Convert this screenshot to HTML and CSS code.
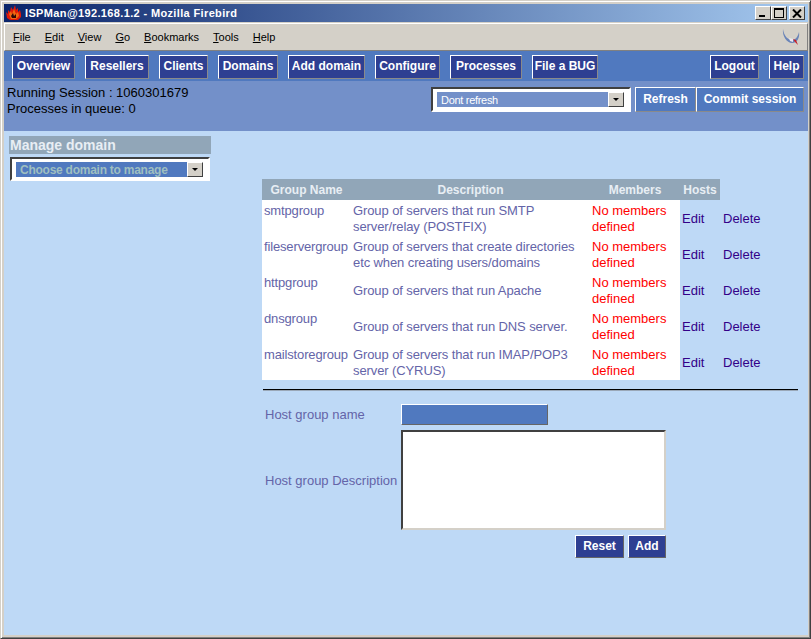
FILE: index.html
```html
<!DOCTYPE html>
<html lang="en">
<head>
<meta charset="UTF-8">
<title>ISPMan@192.168.1.2 - Mozilla Firebird</title>
<link rel="stylesheet" href="styles.css">
</head>
<body>
<div class="window">
  <div class="titlebar">
    <svg class="appicon" width="16" height="16" viewBox="0 0 16 16">
      <path d="M0 7 L2 9 L2 5 L4 7 L5 2 L7 5 L9 0 L10 5 L12 3 L12 7 L14 5 L15 9 L15 12 L12 15 L4 15 L1 13 Z" fill="#e01808"/>
      <path d="M3 9 L5 6 L6 9 L8 4 L10 9 L12 7 L13 11 L10 14 L5 14 Z" fill="#f06a10"/>
      <path d="M5 11 L7 8 L8 11 L10 9 L10 13 L6 13 Z" fill="#300808"/>
    </svg>
    <span class="title">ISPMan@192.168.1.2 - Mozilla Firebird</span>
    <div class="winbtns">
      <span class="winbtn"><i class="min"></i></span>
      <span class="winbtn"><i class="max"></i></span>
      <span class="winbtn close">
        <svg width="10" height="9" viewBox="0 0 10 9"><path d="M1 0.5 L9 8.5 M9 0.5 L1 8.5" stroke="#000" stroke-width="2"/></svg>
      </span>
    </div>
  </div>
  <div class="menubar">
    <span class="menu"><u>F</u>ile</span>
    <span class="menu"><u>E</u>dit</span>
    <span class="menu"><u>V</u>iew</span>
    <span class="menu"><u>G</u>o</span>
    <span class="menu"><u>B</u>ookmarks</span>
    <span class="menu"><u>T</u>ools</span>
    <span class="menu"><u>H</u>elp</span>
    <svg class="throbber" width="20" height="20" viewBox="0 0 20 20">
      <path d="M2 2 C3 9 7 13 11 13 C15 13 17 9 18 5 C19 11 16 16 11 16 C6 16 1 9 2 2 Z" fill="#6a84b8"/>
      <path d="M8 11 L12 12 L12 15 L9 14 Z" fill="#ece8f0"/>
      <path d="M12 12 L15 13 L17 18 L14 15 Z" fill="#c8202a"/>
    </svg>
  </div>
  <div class="nav">
    <a class="btn overview">Overview</a>
    <a class="btn resellers">Resellers</a>
    <a class="btn clients">Clients</a>
    <a class="btn domains">Domains</a>
    <a class="btn adddomain">Add domain</a>
    <a class="btn configure">Configure</a>
    <a class="btn processes">Processes</a>
    <a class="btn filebug">File a BUG</a>
    <a class="btn logout">Logout</a>
    <a class="btn help">Help</a>
  </div>
  <div class="info">
    <div class="status">
      <div>Running Session : 1060301679</div>
      <div>Processes in queue: 0</div>
    </div>
    <div class="selectbox refresh">
      <div class="selectfield"><span>Dont refresh</span><b class="arrow"></b></div>
    </div>
    <a class="lightbtn refreshbtn">Refresh</a>
    <a class="lightbtn commitbtn">Commit session</a>
  </div>
  <div class="main">
    <div class="side">
      <div class="sidehead">Manage domain</div>
      <div class="selectbox domainbox">
        <div class="selectfield domainfield"><span>Choose domain to manage</span><b class="arrow"></b></div>
      </div>
    </div>
    <div class="content">
      <table class="groups">
        <tr>
          <th class="c1">Group Name</th>
          <th class="c2">Description</th>
          <th class="c3">Members</th>
          <th class="c4">Hosts</th>
          <th class="c5"></th>
        </tr>
        <tr>
          <td class="name">smtpgroup</td>
          <td class="desc">Group of servers that run SMTP server/relay (POSTFIX)</td>
          <td class="none">No members defined</td>
          <td class="act"><a>Edit</a></td>
          <td class="act"><a>Delete</a></td>
        </tr>
        <tr>
          <td class="name">fileservergroup</td>
          <td class="desc">Group of servers that create directories etc when creating users/domains</td>
          <td class="none">No members defined</td>
          <td class="act"><a>Edit</a></td>
          <td class="act"><a>Delete</a></td>
        </tr>
        <tr>
          <td class="name">httpgroup</td>
          <td class="desc mid">Group of servers that run Apache</td>
          <td class="none">No members defined</td>
          <td class="act"><a>Edit</a></td>
          <td class="act"><a>Delete</a></td>
        </tr>
        <tr>
          <td class="name">dnsgroup</td>
          <td class="desc mid">Group of servers that run DNS server.</td>
          <td class="none">No members defined</td>
          <td class="act"><a>Edit</a></td>
          <td class="act"><a>Delete</a></td>
        </tr>
        <tr>
          <td class="name">mailstoregroup</td>
          <td class="desc">Group of servers that run IMAP/POP3 server (CYRUS)</td>
          <td class="none">No members defined</td>
          <td class="act"><a>Edit</a></td>
          <td class="act"><a>Delete</a></td>
        </tr>
      </table>
      <div class="rule"></div>
      <div class="formrow">
        <label class="lbl">Host group name</label>
        <div class="textinput"></div>
      </div>
      <div class="formrow descrow">
        <label class="lbl">Host group Description</label>
        <div class="textarea"></div>
      </div>
      <div class="formbtns">
        <a class="btn formbtn resetbtn">Reset</a>
        <a class="btn formbtn addbtn">Add</a>
      </div>
    </div>
  </div>
</div>
</body>
</html>
```

FILE: styles.css
```css
html, body { margin: 0; padding: 0; height: 100%; }
body { background: #d4d0c8; font-family: "Liberation Sans", Arial, sans-serif; font-size: 13px; }

.window { box-sizing: border-box; width: 811px; height: 639px; display: flex; flex-direction: column; padding: 3px 2px 3px 3px; background: #d4d0c8; border: 1px solid; border-color: #d4d0c8 #404040 #404040 #d4d0c8; box-shadow: inset 1px 1px 0 #fff, inset -1px -1px 0 #808080; }

.titlebar { height: 18px; flex: none; display: flex; align-items: center; background: linear-gradient(to right, #0a246a, #a6caf0); color: #fff; padding-left: 2px; }
.appicon { flex: none; margin-right: 3px; }
.title { font-weight: bold; font-size: 11px; letter-spacing: 0.36px; }
.winbtns { margin-left: auto; display: flex; margin-right: 3px; }
.winbtn { box-sizing: border-box; width: 16px; height: 14px; background: #d4d0c8; border: 1px solid; border-color: #fff #404040 #404040 #fff; display: flex; align-items: center; justify-content: center; }
.winbtn.close { margin-left: 2px; }
.min { display: block; width: 6px; height: 2px; background: #000; margin-top: 6px; margin-right: 2px; }
.max { display: block; box-sizing: border-box; width: 10px; height: 10px; border: 1px solid #000; border-top-width: 2px; }

.menubar { height: 28px; flex: none; margin-top: 1px; display: flex; align-items: center; background: #d4d0c8; padding-left: 8px; box-sizing: border-box; border: 1px solid; border-color: #fff #808080 #808080 #fff; font-size: 11px; color: #000; }
.menu { margin-right: 14px; }
.throbber { margin-left: auto; margin-right: 6px; }

.nav { height: 30px; flex: none; box-sizing: border-box; display: flex; align-items: flex-start; gap: 10px; background: #5079bf; padding: 4px 4px 0 8px; }
.btn { box-sizing: border-box; height: 24px; line-height: 21px; text-align: center; background: #2e3f92; color: #fff; font-weight: bold; font-size: 12px; border: 1px solid; border-color: #fff #8a8a8a #8a8a8a #fff; white-space: nowrap; }
.overview { width: 63px; }
.resellers { width: 64px; }
.clients { width: 49px; }
.domains { width: 60px; }
.adddomain { width: 77px; }
.configure { width: 65px; }
.processes { width: 72px; }
.filebug { width: 66px; }
.logout { width: 49px; margin-left: auto; }
.help { width: 35px; }

.info { height: 50px; flex: none; box-sizing: border-box; display: flex; align-items: flex-start; background: #7390c9; padding: 6px 4px 0 3px; }
.status { color: #000; font-size: 13px; line-height: 16px; margin-top: -2px; }
.selectbox { box-sizing: border-box; background: #fff; border: 2px solid; border-color: #404040 #fff #fff #404040; padding: 3px 5px 4px 4px; }
.refresh { margin-left: auto; width: 200px; height: 25px; margin-right: 4px; }
.selectfield { display: flex; align-items: center; justify-content: space-between; height: 15px; background: #7390c9; color: #fff; font-size: 11px; letter-spacing: -0.3px; padding-left: 4px; }
.arrow { box-sizing: border-box; flex: none; width: 16px; height: 15px; background: #d4d0c8; border: 1px solid; border-color: #fff #404040 #404040 #fff; position: relative; }
.arrow::after { content: ""; position: absolute; left: 4px; top: 5px; border: 3px solid transparent; border-top: 3px solid #000; border-bottom: 0; }
.lightbtn { box-sizing: border-box; height: 25px; line-height: 23px; text-align: center; background: #5079bf; color: #fff; font-weight: bold; font-size: 12px; border: 1px solid; border-color: #fff #8a8a8a #8a8a8a #fff; }
.refreshbtn { width: 61px; }
.commitbtn { width: 108px; }

.main { flex: 1; display: flex; background: #bed9f6; min-height: 0; }
.side { width: 258px; flex: none; padding: 5px 0 0 5px; box-sizing: border-box; }
.sidehead { width: 202px; height: 18px; line-height: 18px; box-sizing: border-box; padding-left: 1px; background: #91a6b8; color: #e8eef4; font-weight: bold; font-size: 14px; }
.domainbox { width: 200px; height: 24px; margin: 3px 0 0 1px; }
.domainfield { background: #5079bf; color: #9fbfc0; font-weight: bold; font-size: 12px; letter-spacing: -0.25px; }

.content { flex: 1; padding-top: 48px; padding-right: 8px; }
.groups { border-collapse: collapse; width: 538px; table-layout: fixed; }
.groups th { height: 21px; padding: 0; background: #91a6b8; color: #e8eef4; font-size: 12px; font-weight: bold; text-align: center; }
.groups .c5 { background: none; }
.groups td { height: 36px; padding: 3px 2px 0; line-height: 16px; box-sizing: border-box; }
.c1 { width: 89px; }
.c2 { width: 239px; }
.c3 { width: 90px; }
.c4 { width: 40px; }
.c5 { width: 80px; }
.name { background: #fff; color: #6464a8; vertical-align: top; white-space: nowrap; letter-spacing: -0.15px; }
.desc { background: #fff; color: #6464a8; vertical-align: top; letter-spacing: -0.1px; }
.groups .desc.mid { vertical-align: middle; padding-top: 2px; }
.none { background: #fff; color: #f00; vertical-align: top; }
.groups .act { color: #330088; white-space: nowrap; padding-top: 2px; }
.groups .act + .act { padding-left: 3px; }

.rule { height: 1px; width: 535px; margin: 9px 0 13px 1px; background: #000; border-bottom: 1px solid #9aa8b8; }
.formrow { display: flex; align-items: center; }
.lbl { width: 136px; padding-left: 3px; flex: none; box-sizing: border-box; color: #6464a8; white-space: nowrap; margin-right: 3px; }
.textinput { box-sizing: border-box; width: 147px; height: 21px; background: #5079bf; border: 1px solid; border-color: #fff #666 #666 #fff; }
.descrow { margin-top: 5px; }
.textarea { box-sizing: border-box; width: 265px; height: 100px; background: #fff; border: 2px solid; border-color: #404040 #d4d0c8 #d4d0c8 #404040; }
.formbtns { display: flex; justify-content: flex-end; width: 404px; gap: 4px; margin-top: 5px; }
.formbtn { height: 23px; line-height: 21px; border-color: #fff #666 #666 #fff; }
.resetbtn { width: 49px; }
.addbtn { width: 38px; }
```
